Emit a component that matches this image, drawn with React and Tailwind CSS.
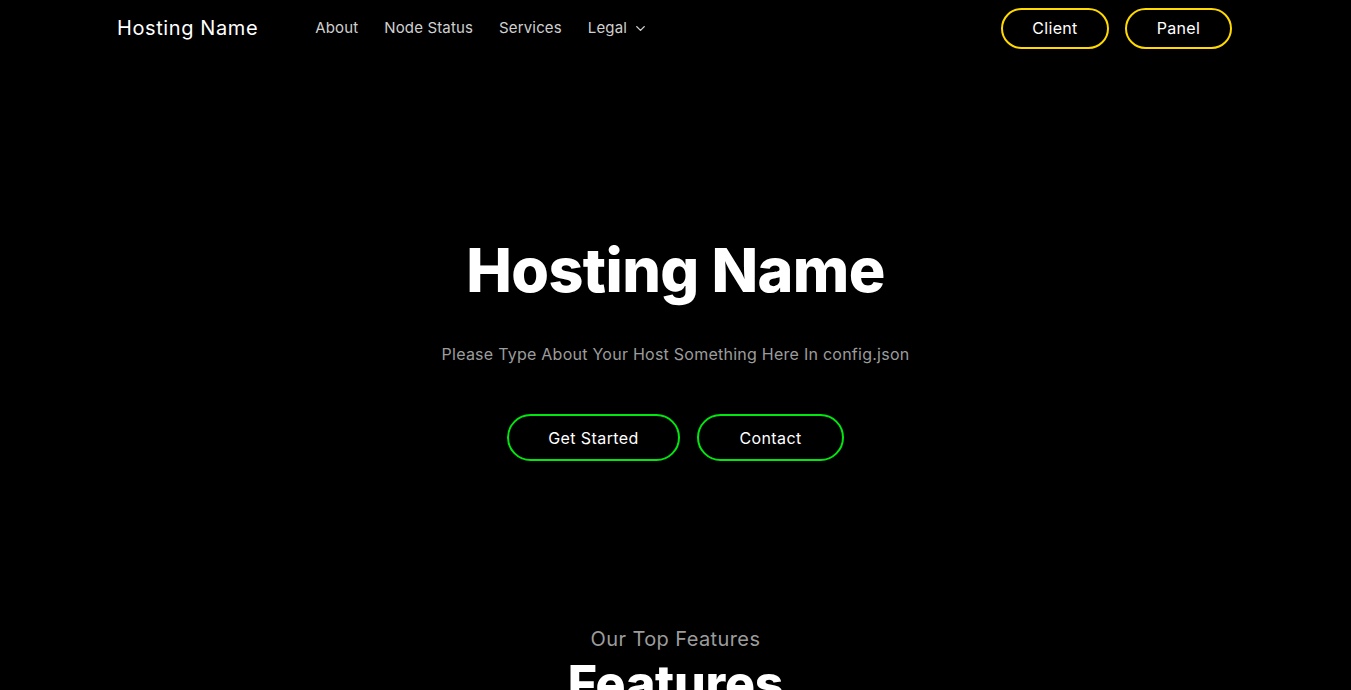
import React from "react";
import { ChevronDown } from "lucide-react";

const font = { fontFamily: "Inter, 'Open Sans', sans-serif" };

const App = () => {
  return (
    <div
      className="min-h-screen bg-black text-white overflow-hidden"
      style={font}
    >
      {/* Navbar */}
      <nav className="mx-auto max-w-[1141px] pl-3 pr-[14px] h-14 flex items-center">
        <a className="text-[20px] text-white tracking-[0.6px] mr-[57px]">
          Hosting Name
        </a>
        <ul className="flex items-center gap-[26px] text-[15px] text-[#d0d0d0] tracking-[0.15px]">
          <li>About</li>
          <li>Node Status</li>
          <li>Services</li>
          <li className="flex items-center gap-[6px]">
            Legal
            <ChevronDown size={15} strokeWidth={2.25} />
          </li>
        </ul>
        <div className="ml-auto flex items-center gap-4">
          <button className="w-[108px] h-[41px] rounded-full border-2 border-[#ffd900] text-[16px] tracking-[0.3px] text-white">
            Client
          </button>
          <button className="w-[107px] h-[41px] rounded-full border-2 border-[#ffd900] text-[16px] tracking-[0.3px] text-white">
            Panel
          </button>
        </div>
      </nav>

      {/* Hero */}
      <section className="pt-[176px] flex flex-col items-center text-center">
        <h1 className="text-[61px] leading-[76px] font-extrabold tracking-[-0.6px]">
          Hosting Name
        </h1>
        <p className="mt-[34px] text-[16px] leading-6 text-[#9c9c9c] tracking-[0.25px]">
          Please Type About Your Host Something Here In config.json
        </p>
        <div className="mt-12 flex gap-[17px]">
          <button className="w-[173px] h-[47px] rounded-full border-2 border-[#00e60f] text-[16px] tracking-[0.4px] text-white">
            Get Started
          </button>
          <button className="w-[147px] h-[47px] rounded-full border-2 border-[#00e60f] text-[16px] tracking-[0.4px] text-white">
            Contact
          </button>
        </div>
      </section>

      {/* Features */}
      <section className="mt-[164px] flex flex-col items-center text-center">
        <p className="text-[20px] leading-7 text-[#9c9c9c] tracking-[0.4px]">
          Our Top Features
        </p>
        <h2 className="text-[50px] leading-[60px] font-extrabold tracking-[-0.2px]">
          Features
        </h2>
      </section>
    </div>
  );
};

export default App;
